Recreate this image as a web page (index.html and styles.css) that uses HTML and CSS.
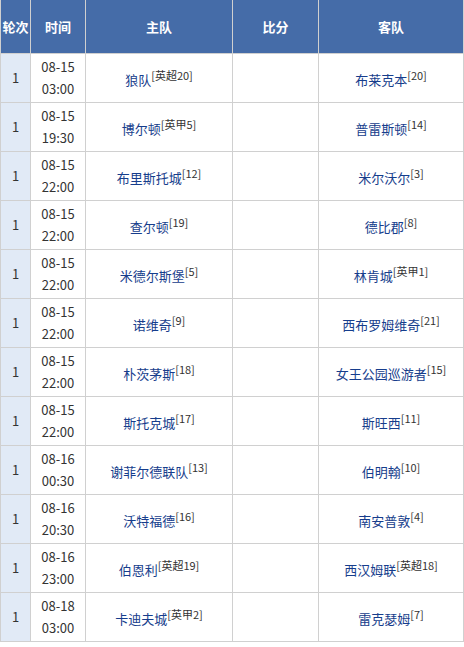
FILE: index.html
```html
<!DOCTYPE html>
<html>
<head>
<meta charset="utf-8">
<link rel="stylesheet" href="styles.css">
</head>
<body>
<div class="fixtures">
  <div class="row head"><div>轮次</div><div>时间</div><div>主队</div><div>比分</div><div>客队</div></div>
  <div class="row"><div class="round">1</div><div class="time">08-15<br>03:00</div><div class="team"><span><a>狼队</a><sup>[英超20]</sup></span></div><div></div><div class="team"><span><a>布莱克本</a><sup>[20]</sup></span></div></div>
  <div class="row"><div class="round">1</div><div class="time">08-15<br>19:30</div><div class="team"><span><a>博尔顿</a><sup>[英甲5]</sup></span></div><div></div><div class="team"><span><a>普雷斯顿</a><sup>[14]</sup></span></div></div>
  <div class="row"><div class="round">1</div><div class="time">08-15<br>22:00</div><div class="team"><span><a>布里斯托城</a><sup>[12]</sup></span></div><div></div><div class="team"><span><a>米尔沃尔</a><sup>[3]</sup></span></div></div>
  <div class="row"><div class="round">1</div><div class="time">08-15<br>22:00</div><div class="team"><span><a>查尔顿</a><sup>[19]</sup></span></div><div></div><div class="team"><span><a>德比郡</a><sup>[8]</sup></span></div></div>
  <div class="row"><div class="round">1</div><div class="time">08-15<br>22:00</div><div class="team"><span><a>米德尔斯堡</a><sup>[5]</sup></span></div><div></div><div class="team"><span><a>林肯城</a><sup>[英甲1]</sup></span></div></div>
  <div class="row"><div class="round">1</div><div class="time">08-15<br>22:00</div><div class="team"><span><a>诺维奇</a><sup>[9]</sup></span></div><div></div><div class="team"><span><a>西布罗姆维奇</a><sup>[21]</sup></span></div></div>
  <div class="row"><div class="round">1</div><div class="time">08-15<br>22:00</div><div class="team"><span><a>朴茨茅斯</a><sup>[18]</sup></span></div><div></div><div class="team"><span><a>女王公园巡游者</a><sup>[15]</sup></span></div></div>
  <div class="row"><div class="round">1</div><div class="time">08-15<br>22:00</div><div class="team"><span><a>斯托克城</a><sup>[17]</sup></span></div><div></div><div class="team"><span><a>斯旺西</a><sup>[11]</sup></span></div></div>
  <div class="row"><div class="round">1</div><div class="time">08-16<br>00:30</div><div class="team"><span><a>谢菲尔德联队</a><sup>[13]</sup></span></div><div></div><div class="team"><span><a>伯明翰</a><sup>[10]</sup></span></div></div>
  <div class="row"><div class="round">1</div><div class="time">08-16<br>20:30</div><div class="team"><span><a>沃特福德</a><sup>[16]</sup></span></div><div></div><div class="team"><span><a>南安普敦</a><sup>[4]</sup></span></div></div>
  <div class="row"><div class="round">1</div><div class="time">08-16<br>23:00</div><div class="team"><span><a>伯恩利</a><sup>[英超19]</sup></span></div><div></div><div class="team"><span><a>西汉姆联</a><sup>[英超18]</sup></span></div></div>
  <div class="row"><div class="round">1</div><div class="time">08-18<br>03:00</div><div class="team"><span><a>卡迪夫城</a><sup>[英甲2]</sup></span></div><div></div><div class="team"><span><a>雷克瑟姆</a><sup>[7]</sup></span></div></div>
</div>
</body>
</html>
```

FILE: styles.css
```css
html, body {
  margin: 0;
  padding: 0;
  background: #ffffff;
}

.fixtures {
  width: 464px;
  box-sizing: border-box;
  display: flex;
  flex-direction: column;
  gap: 1px;
  padding: 0 1px 1px 1px;
  background: #d0d0d0;
  font-family: "Noto Sans CJK SC", "Liberation Sans", sans-serif;
  font-size: 13px;
  color: #333333;
}

.row {
  display: grid;
  grid-template-columns: 29px 54px 146px 85px 144px;
  gap: 1px;
  height: 48px;
}

.row > div {
  background: #ffffff;
  display: flex;
  align-items: center;
  justify-content: center;
  text-align: center;
  line-height: 22px;
}

.row.head {
  height: 53px;
}

.row.head > div {
  background: #456ca8;
  color: #ffffff;
  font-weight: bold;
}

.row > .round {
  background: #e1eaf6;
}

.row > .team {
  padding-top: 3px;
}

.team a {
  color: #163d8c;
  text-decoration: none;
}

.team sup {
  font-size: 11px;
  color: #333333;
  vertical-align: 5px;
  line-height: 0;
}
```
